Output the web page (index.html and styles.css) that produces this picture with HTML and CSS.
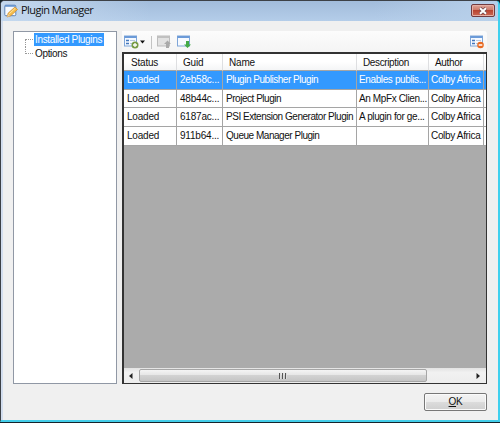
FILE: index.html
```html
<!DOCTYPE html>
<html lang="en">
<head>
<meta charset="utf-8">
<title>Plugin Manager</title>
<link rel="stylesheet" href="styles.css">
</head>
<body>
<div class="window">
  <header class="titlebar">
    <svg class="app-icon" width="14" height="14" viewBox="0 0 14 14">
      <rect x=".8" y="1.2" width="11" height="10.5" rx="1" fill="#f7fafd" stroke="#5e83b4"/>
      <path d="M1 2h10.600" stroke="#5f91cf" stroke-width="1.600"/>
      <path d="M3 13l1.200-4L11 3l2.500 2.500-6.700 6.300z" fill="#f5bd4b" stroke="#c98730" stroke-width=".7"/>
      <path d="M5.300 9.700l6-5.500" stroke="#ffe6a0"/>
      <path d="M3 13l1-3 2 2z" fill="#e9cda0"/>
    </svg>
    <h1>Plugin Manager</h1>
    <button class="close" aria-label="Close">
      <svg width="10" height="8" viewBox="0 0 10 8"><path d="M2 1.300l6 5.400M8 1.300l-6 5.400" stroke="#6c4a50" stroke-width="3.400"/><path d="M2 1.300l6 5.400M8 1.300l-6 5.400" stroke="#fff" stroke-width="2"/></svg>
    </button>
  </header>
  <main class="content">
    <nav class="tree">
      <div class="node"><i class="branch first"></i><span class="selected">Installed Plugins</span></div>
      <div class="node"><i class="branch last"></i><span>Options</span></div>
    </nav>
    <section class="panel">
      <div class="toolbar">
        <svg width="15" height="14" viewBox="0 0 15 14">
          <rect x=".5" y="1" width="12" height="10" fill="#f5f9ff" stroke="#7fa6d8"/>
          <path d="M.5 2h12" stroke="#6b9ad8" stroke-width="2"/>
          <path d="M2 5.500h3M2 8.500h3" stroke="#4478bd" stroke-width="1.500"/><path d="M6 5.500h5M6 8.500h3" stroke="#b7c8df"/>
          <circle cx="11" cy="10" r="3.500" fill="#779b45"/><path d="M9 10h4M11 8v4" stroke="#fff" stroke-width="1.300"/>
        </svg>
        <svg class="caret" width="5" height="4" viewBox="0 0 5 4"><path d="M0 .5h5L2.500 3.500z" fill="#111"/></svg>
        <i class="separator"></i>
        <svg width="14" height="14" viewBox="0 0 14 14">
          <rect x=".5" y="1" width="12" height="10" fill="#e2e2e2" stroke="#bcbcbc"/>
          <path d="M.5 2h12" stroke="#c0c0c0" stroke-width="2"/>
          <path d="M10.500 5.500L14 9h-2v4H9V9H7z" fill="#aaa"/>
        </svg>
        <svg class="install" width="14" height="14" viewBox="0 0 14 14">
          <rect x=".5" y="1" width="12" height="10" fill="#f7faff" stroke="#7fa6d8"/>
          <path d="M.5 2h12" stroke="#6b9ad8" stroke-width="2"/>
          <path d="M9 6h3v3.500h2L10.500 13 7 9.500h2z" fill="#43a947"/>
        </svg>
        <svg class="remove" width="14" height="14" viewBox="0 0 14 14">
          <rect x=".5" y="1" width="12" height="10" fill="#f5f9ff" stroke="#7fa6d8"/>
          <path d="M.5 2h12" stroke="#6b9ad8" stroke-width="2"/>
          <path d="M2 5.500h3M2 8.500h3" stroke="#4478bd" stroke-width="1.500"/><path d="M6 5.500h5M6 8.500h3" stroke="#b7c8df"/>
          <circle cx="10.500" cy="10" r="3.300" fill="#e96a22"/><path d="M8.700 10h3.600" stroke="#fff" stroke-width="1.400"/>
        </svg>
      </div>
      <div class="grid">
        <div class="row head"><span>Status</span><span>Guid</span><span>Name</span><span>Description</span><span>Author</span><span></span></div>
        <div class="row active"><span>Loaded</span><span>2eb58c...</span><span>Plugin Publisher Plugin</span><span>Enables publis...</span><span>Colby Africa</span><span></span></div>
        <div class="row"><span>Loaded</span><span>48b44c...</span><span>Project Plugin</span><span>An MpFx Clien...</span><span>Colby Africa</span><span></span></div>
        <div class="row"><span>Loaded</span><span>6187ac...</span><span>PSI Extension Generator Plugin</span><span>A plugin for ge...</span><span>Colby Africa</span><span></span></div>
        <div class="row"><span>Loaded</span><span>911b64...</span><span>Queue Manager Plugin</span><span></span><span>Colby Africa</span><span></span></div>
        <div class="scrollbar">
          <svg class="arrow" width="4" height="6" viewBox="0 0 4 6"><path d="M3.500 0v6L0 3z" fill="#222"/></svg>
          <div class="thumb"><i></i><i></i><i></i></div>
          <svg class="arrow" width="4" height="6" viewBox="0 0 4 6"><path d="M.5 0v6L4 3z" fill="#222"/></svg>
        </div>
      </div>
    </section>
  </main>
  <footer><button class="ok"><u>O</u>K</button></footer>
</div>
</body>
</html>
```
FILE: styles.css
```css
* { box-sizing: border-box; }
html, body { height: 100%; }
body {
  margin: 0;
  overflow: hidden;
  background: #15232b;
  font: 10px/12px "Liberation Sans", Arial, sans-serif;
  letter-spacing: -0.2px;
  color: #111;
}
.window {
  display: flex;
  flex-direction: column;
  height: 422px;
  background: #f0f0f0;
  border: 1px solid #3d4147;
  border-right: 2px solid #3fd0ee;
  border-bottom: 2px solid #42cde9;
  border-radius: 5px 5px 0 0;
  box-shadow: inset 2px 0 #d3deef;
  overflow: hidden;
}
.titlebar {
  display: flex;
  flex: none;
  height: 20px;
  padding-left: 3px;
  background: linear-gradient(90deg, #c4d8ee, transparent 30%, transparent 75%, #b8d0ea), linear-gradient(#a2bcdb, #b4cde9);
}
.app-icon { margin-top: 3px; }
h1 {
  margin: 1px 0 0 3px;
  font: 11px/16px "Open Sans", "Noto Sans", sans-serif;
  letter-spacing: -0.55px;
}
.close {
  display: flex;
  align-items: center;
  justify-content: center;
  width: 24px;
  height: 13px;
  margin: 3px 3px 0 auto;
  padding: 0;
  border: 1px solid #713b40;
  border-radius: 2px;
  background: linear-gradient(#dda59a, #cd7767 48%, #b84431 50%, #cc6855);
  box-shadow: inset 0 0 0 1px #e5afa5;
}
.content { display: flex; flex: none; height: 364px; padding: 10px 10px 0 12px; }
.tree {
  width: 104px;
  height: 353px;
  padding: 1px 0 0 11px;
  background: #fff;
  border: 1px solid #9098a5;
  letter-spacing: -0.34px;
}
.node { display: flex; height: 14px; }
.node span { height: 13px; padding: 0 1px; line-height: 13px; }
.node .selected { padding-right: 2px; background: #3399ff; color: #fff; }
.branch { width: 8px; margin-right: 1px; border-left: 1px dotted #999; }
.branch.first { height: 8px; margin-top: 6px; border-top: 1px dotted #999; }
.branch.last { height: 7px; border-bottom: 1px dotted #999; }
.panel { width: 365px; margin-left: 5px; }
.toolbar {
  display: flex;
  align-items: center;
  height: 21px;
  padding: 1px 3px 0 2px;
  border-radius: 0 3px 3px 0;
  background: linear-gradient(#fcfcfc, #f4f4f4);
}
.caret { margin-left: 1px; }
.separator { width: 1px; height: 13px; margin: 0 5px 0 6px; background: #c3c3c3; }
.install { margin-left: 6px; }
.remove { margin-left: auto; }
.grid {
  display: flex;
  flex-direction: column;
  height: 332px;
  background: #ababab;
  border: 2px solid #333;
  border-width: 2px 1px 1px 2px;
}
.row {
  display: grid;
  flex: none;
  grid-template-columns: 53px 46px 134px 72px 55px 2px;
  height: 18.7px;
  background: #fff;
  line-height: 17px;
}
.row span {
  overflow: hidden;
  padding-left: 3px;
  border-right: 1px solid #a5a5a5;
  border-bottom: 1px solid #a5a5a5;
  white-space: nowrap;
}
.row span:nth-child(3) { letter-spacing: -0.47px; }
.row span:nth-child(4) { padding-left: 2px; letter-spacing: -0.38px; }
.row span:nth-child(5) { padding-left: 2px; letter-spacing: -0.33px; }
.row.head { height: 17px; background: linear-gradient(#fff 45%, #f3f4f5); }
.row.head span { padding-left: 6px; border-right-color: #dedfe1; }
.row.head span:first-child { padding-left: 7px; }
.row.head span:nth-child(3) { letter-spacing: -0.2px; }
.row span:last-child, .row.head span:last-child { border-right: 0; padding: 0; }
.active { background: #3399ff; color: #fff; }
.scrollbar {
  display: flex;
  align-items: center;
  height: 15px;
  margin-top: auto;
  padding: 0 6px 0 5px;
  background: linear-gradient(#e3e3e3, #f1f1f1 30%, #ededed);
}
.thumb {
  display: flex;
  align-items: center;
  justify-content: center;
  gap: 1px;
  width: 288px;
  height: 13px;
  margin: 0 auto 0 6px;
  border: 1px solid #a6a6a6;
  border-radius: 2px;
  background: linear-gradient(#f4f4f4, #e5e5e5 48%, #d2d2d2 50%, #c5c5c5);
}
.thumb i { width: 2px; height: 6px; border-left: 1px solid #555; background: #ddd; }
footer { display: flex; justify-content: flex-end; padding: 8px 11px 0 0; }
.ok {
  width: 63px;
  height: 18px;
  padding: 0;
  border: 1px solid #777;
  border-radius: 2px;
  background: linear-gradient(#f3f3f3, #ebebeb 48%, #dcdcdc 50%, #cfcfcf);
  box-shadow: inset 0 0 0 1px #fafafa;
  font: 10px/14px "Liberation Sans", Arial, sans-serif;
  letter-spacing: -0.3px;
  color: #111;
}
```
